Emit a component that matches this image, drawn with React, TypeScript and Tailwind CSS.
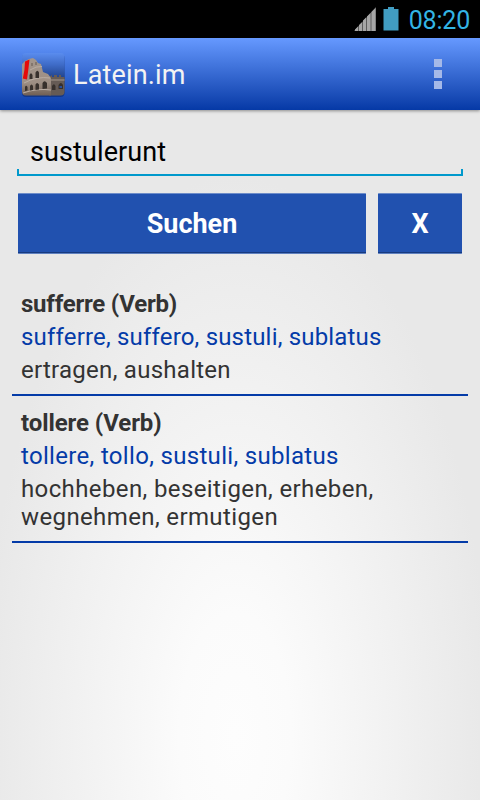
import React, { useState } from 'react';

interface Entry {
  title: string;
  forms: string;
  meaning: string;
}

const entries: Entry[] = [
  {
    title: 'sufferre (Verb)',
    forms: 'sufferre, suffero, sustuli, sublatus',
    meaning: 'ertragen, aushalten',
  },
  {
    title: 'tollere (Verb)',
    forms: 'tollere, tollo, sustuli, sublatus',
    meaning: 'hochheben, beseitigen, erheben, wegnehmen, ermutigen',
  },
];

const SignalIcon: React.FC = () => (
  <svg width="22" height="24" viewBox="0 0 22 24" className="shrink-0">
    <path d="M0 24L22 0V24Z" fill="#5c5c5c" />
    <path
      d="M1 24V22.500L4 19.600V24ZM5 24V18L8 15.300V24ZM9 24V13.500L12 10.500V24ZM13 24V9.500L16.500 6V24ZM17.500 24V5L21.500 1V24Z"
      fill="#a6a6a6"
    />
  </svg>
);

const BatteryIcon: React.FC = () => (
  <svg width="16" height="24" viewBox="0 0 16 24" className="shrink-0">
    <path d="M5 0H11V2H15.5V23.5H0.5V2H5Z" fill="#419dc2" />
  </svg>
);

// Launcher icon: Colosseum with a red banner
const AppIcon: React.FC = () => (
  <svg width="44" height="46" viewBox="0 0 44 46" className="shrink-0">
    <defs>
      <linearGradient id="sky" x1="0" y1="0" x2="0" y2="1">
        <stop offset="0" stopColor="#5f92f5" />
        <stop offset="0.3" stopColor="#3f6cc8" />
        <stop offset="0.65" stopColor="#1b3b80" />
      </linearGradient>
      <linearGradient id="stone" x1="0" y1="0" x2="0" y2="1">
        <stop offset="0" stopColor="#a3968c" />
        <stop offset="0.65" stopColor="#9e8f84" />
        <stop offset="1" stopColor="#6e5d52" />
      </linearGradient>
      <clipPath id="tile">
        <rect x="1" y="2" width="42.500" height="42.500" rx="4" />
      </clipPath>
    </defs>
    <rect x="1" y="3" width="42.500" height="43" rx="4" fill="#0b2767" opacity="0.55" />
    <g clipPath="url(#tile)">
      <rect width="44" height="45" fill="url(#sky)" />
      <path d="M28 26L31 24V26H33V24H36V26H38V24H40V26H44V45H28Z" fill="#665b55" />
      <path d="M30 30H44V28H30Z" fill="#857970" />
      <path
        d="M0 14L4 10L8 8L12 7L15 9L17 12L20 13L21 17L22 21L27 23L30 27V45H0Z"
        fill="url(#stone)"
      />
      <path d="M9 19Q15 15 21 15.500M3 32Q16 25 29 27M2 42Q16 37 30 39" stroke="#b9ada3" fill="none" />
      <path d="M11 12V15M15 11V14" stroke="#645850" />
      <path
        d="M8.500 28V24Q10 20.500 11.500 24V28ZM14.500 27V21.500Q16.500 18 18 21.500V27ZM4 40V36Q5 33.500 6.500 36V39.500ZM9 39.500V35Q10.500 32 12 35V39ZM14.500 39V33.500Q16 30.500 18 33.500V38.500ZM21.500 38V32Q23.500 28.500 26 32V37.500ZM31 39V35Q33 31.500 34.500 35V39ZM37.500 38V34Q40 30 42 34V38Z"
        fill="#37302c"
      />
      <path d="M38.500 37V35H41V37Z" fill="#294f99" />
      <path d="M4 10.500L8.500 8.500Q7.500 18 6 28.500L1.800 27.500Q4 18 4 10.500Z" fill="#e60a0a" />
    </g>
  </svg>
);

const StatusBar: React.FC = () => (
  <div className="flex h-[38px] items-center justify-end bg-black pr-[10px]">
    <SignalIcon />
    <div className="ml-[7px]">
      <BatteryIcon />
    </div>
    <span className="ml-[10px] pt-[3px] text-[25px] leading-[35px] tracking-[-0.2px] text-[#33b5e5]">08:20</span>
  </div>
);

const ActionBar: React.FC = () => (
  <header className="flex h-[72px] items-center bg-linear-to-b from-[#6699ff] to-[#0539a6] pr-[38px] pl-[21px] shadow-[0_1px_3px_rgba(0,0,0,0.4)]">
    <AppIcon />
    <h1 className="ml-2 flex-1 pt-[2px] text-[27px] leading-8 tracking-[0.15px] text-[#f3f3f3]">Latein.im</h1>
    <button className="flex flex-col gap-[3px]" aria-label="Menü">
      <span className="size-2 bg-[#a5b9e8]" />
      <span className="size-2 bg-[#a5b9e8]" />
      <span className="size-2 bg-[#a5b9e8]" />
    </button>
  </header>
);

const buttonClass =
  'h-[61px] rounded-[1px] border-y border-t-[#6d8cc9] border-b-[#5f80bf] bg-[#2151af] pt-[2px] text-[27px] font-bold text-white shadow-[inset_0_-1px_0_#173a80]';

export default function App() {
  const [query, setQuery] = useState('sustulerunt');

  return (
    <div className="flex h-[800px] w-[480px] flex-col overflow-hidden bg-[radial-gradient(ellipse_255px_560px_at_49%_92%,#fdfdfd_0%,#fbfbfb_22%,#e8e8e8_100%)] font-['Roboto',sans-serif]">
      <StatusBar />
      <ActionBar />
      <div className="px-[17px] pt-[20px]">
        <input
          value={query}
          onChange={(e) => setQuery(e.target.value)}
          className="block h-[39px] w-full px-[13px] pt-[6px] text-[27px] tracking-[0.1px] text-black outline-none"
        />
        <div className="h-[7px] border-x-2 border-b-2 border-[#0099cc]" />
      </div>
      <div className="mt-[17px] flex gap-3 px-[18px]">
        <button className={`${buttonClass} flex-1`}>Suchen</button>
        <button className={`${buttonClass} w-[84px]`} onClick={() => setQuery('')}>
          X
        </button>
      </div>
      <ul className="mt-[23px] px-3">
        {entries.map((entry) => (
          <li
            key={entry.title}
            className="group flex flex-col gap-[5px] border-b-2 border-[#043ba8] px-[9px] pt-[13px] pb-[10px] text-[24px] leading-[28px] text-[#333333]"
          >
            <h2 className="font-bold tracking-[-0.1px] group-first:tracking-[-0.23px]">{entry.title}</h2>
            <p className="tracking-[0.32px] text-[#043ba8] group-first:tracking-[0.18px]">{entry.forms}</p>
            <p className="tracking-[0.38px] group-first:tracking-[0.27px]">{entry.meaning}</p>
          </li>
        ))}
      </ul>
    </div>
  );
}
